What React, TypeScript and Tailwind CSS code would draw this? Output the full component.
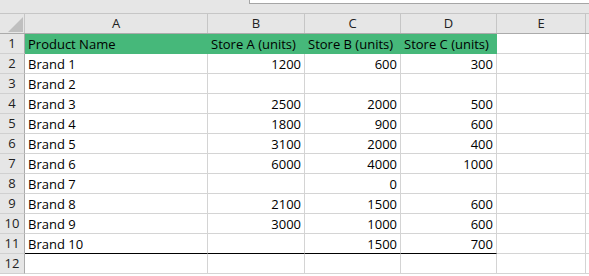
const columns = [
  { key: 'A', width: 'w-[183px]' },
  { key: 'B', width: 'w-[97px]' },
  { key: 'C', width: 'w-[96px]' },
  { key: 'D', width: 'w-[96px]' },
  { key: 'E', width: 'w-[89px]' },
]

type Row = [string, string, string, string]

const rows: Row[] = [
  ['Brand 1', '1200', '600', '300'],
  ['Brand 2', '', '', ''],
  ['Brand 3', '2500', '2000', '500'],
  ['Brand 4', '1800', '900', '600'],
  ['Brand 5', '3100', '2000', '400'],
  ['Brand 6', '6000', '4000', '1000'],
  ['Brand 7', '', '0', ''],
  ['Brand 8', '2100', '1500', '600'],
  ['Brand 9', '3000', '1000', '600'],
  ['Brand 10', '', '1500', '700'],
]

const font = "font-['Open_Sans','Liberation_Sans',sans-serif]"

function RowHeader({ n }: { n: number }) {
  return (
    <div className="w-[25px] shrink-0 h-[20px] bg-[#e6e6e6] border-r border-b border-r-[#ababab] border-b-[#d0d0d0] flex items-center justify-center pt-[1px] text-[13px] text-[#222]">
      {n}
    </div>
  )
}

function Cell({
  value,
  width,
  align = 'left',
  last = false,
}: {
  value: string
  width: string
  align?: 'left' | 'right'
  last?: boolean
}) {
  return (
    <div
      className={`${width} shrink-0 h-[20px] border-r border-b border-r-[#d4d4d4] px-[3px] pt-[1px] leading-[19px] text-[13px] text-black whitespace-nowrap ${
        align === 'right' ? 'text-right' : 'text-left'
      } ${last ? 'border-b-black' : 'border-b-[#d4d4d4]'}`}
    >
      {value}
    </div>
  )
}

export default function App() {
  return (
    <div className={`w-[589px] h-[276px] overflow-hidden bg-white ${font}`}>
      {/* formula bar edge */}
      <div className="h-[13px] bg-[#e6e6e6] flex">
        <div className="ml-[249px] flex-1 h-[4px] bg-white border-l border-b border-[#a6a6a6]" />
      </div>

      {/* column headers */}
      <div className="flex h-[21px] bg-[#e6e6e6] border-t border-b border-t-[#c6c6c6] border-b-[#ababab]">
        <div className="w-[25px] shrink-0 border-r border-[#c6c6c6] flex items-end justify-end pr-[1px] pb-[1px]">
          <div className="w-0 h-0 border-l-[15px] border-b-[15px] border-l-transparent border-b-[#bfbfbf]" />
        </div>
        {columns.map((c) => (
          <div
            key={c.key}
            className={`${c.width} shrink-0 border-r border-[#c6c6c6] flex items-center justify-center text-[13px] text-[#222] pt-[1px]`}
          >
            {c.key}
          </div>
        ))}
        <div className="flex-1" />
      </div>

      {/* row 1: table header */}
      <div className="flex">
        <RowHeader n={1} />
        {['Product Name', 'Store A (units)', 'Store B (units)', 'Store C (units)'].map((h, i) => (
          <div
            key={h}
            className={`${columns[i].width} shrink-0 h-[20px] bg-[#46b87a] border-r border-b border-[#46b87a] px-[3px] pt-[1px] leading-[19px] text-[13px] text-black whitespace-nowrap`}
          >
            {h}
          </div>
        ))}
        <Cell value="" width={columns[4].width} />
        <div className="flex-1 h-[20px] border-b border-[#d4d4d4]" />
      </div>

      {rows.map((r, idx) => {
        const last = idx === rows.length - 1
        return (
          <div key={idx} className="flex">
            <RowHeader n={idx + 2} />
            <Cell value={r[0]} width={columns[0].width} last={last} />
            <Cell value={r[1]} width={columns[1].width} align="right" last={last} />
            <Cell value={r[2]} width={columns[2].width} align="right" last={last} />
            <Cell value={r[3]} width={columns[3].width} align="right" last={last} />
            <Cell value="" width={columns[4].width} />
            <div className="flex-1 h-[20px] border-b border-[#d4d4d4]" />
          </div>
        )
      })}

      <div className="flex">
        <RowHeader n={12} />
        {columns.map((c) => (
          <Cell key={c.key} value="" width={c.width} />
        ))}
        <div className="flex-1 h-[20px] border-b border-[#d4d4d4]" />
      </div>
    </div>
  )
}
